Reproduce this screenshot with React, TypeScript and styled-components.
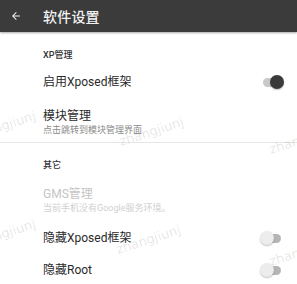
import React from "react";
import styled, { createGlobalStyle } from "styled-components";

const Global = createGlobalStyle`
  html, body { margin: 0; padding: 0; background: #ffffff; }
  body { font-family: Roboto, "Noto Sans CJK SC", "Noto Sans", sans-serif; }
  * { box-sizing: border-box; }
`;

const Page = styled.div`
  width: 297px;
  height: 284px;
  position: relative;
  overflow: hidden;
  background: #fff;
  display: flex;
  flex-direction: column;
`;

const Toolbar = styled.div`
  height: 32px;
  background: #3b3b3b;
  display: flex;
  align-items: center;
  padding-left: 9px;
  box-shadow: 0 1px 2px rgba(0,0,0,0.35);
  position: relative;
  z-index: 1;
  flex-shrink: 0;
`;

const Back = styled.div`
  width: 14px;
  height: 14px;
  display: flex;
  align-items: center;
  justify-content: center;
`;

const Title = styled.div`
  margin-left: 20px;
  color: #f2f2f2;
  font-size: 14px;
  font-family: "Noto Sans CJK SC", sans-serif;
  font-weight: 500;
  letter-spacing: 0.2px;
`;

const Section = styled.div<{ $top: number }>`
  padding-top: ${(p) => p.$top}px;
  display: flex;
  flex-direction: column;
`;

const Header = styled.div`
  padding-left: 43px;
  font-size: 9px;
  height: 14px;
  line-height: 14px;
  color: #333;
  font-family: Roboto, "Noto Sans CJK SC", sans-serif;
  font-weight: 500;
`;

const Row = styled.div<{ $h: number; $pt?: number }>`
  height: ${(p) => p.$h}px;
  padding-top: ${(p) => p.$pt ?? 0}px;
  display: flex;
  align-items: center;
  padding-left: 43px;
  padding-right: 14px;
`;

const Texts = styled.div`
  flex: 1;
  display: flex;
  flex-direction: column;
`;

const Label = styled.div<{ $dim?: boolean }>`
  font-size: 12px;
  line-height: 15px;
  color: ${(p) => (p.$dim ? "#c4c4c4" : "#2a2a2a")};
  font-family: Roboto, "Noto Sans CJK SC", sans-serif;
`;

const Sub = styled.div<{ $dim?: boolean }>`
  font-size: 9px;
  line-height: 12px;
  color: ${(p) => (p.$dim ? "#d0d0d0" : "#8a8a8a")};
  font-family: Roboto, "Noto Sans CJK SC", sans-serif;
`;

const Divider = styled.div`
  height: 1px;
  background: #e6e6e6;
`;

const Track = styled.div<{ $on: boolean }>`
  width: 18px;
  height: 9px;
  border-radius: 5px;
  background: ${(p) => (p.$on ? "#c9c9c9" : "#b5b5b5")};
  position: relative;
  margin-right: 2px;
`;

const Thumb = styled.div<{ $on: boolean }>`
  position: absolute;
  top: -2.5px;
  left: ${(p) => (p.$on ? "7px" : "-3px")};
  width: 14px;
  height: 14px;
  border-radius: 50%;
  background: ${(p) => (p.$on ? "#3a3a3a" : "#ececec")};
  box-shadow: 0 1px 1.5px rgba(0,0,0,0.25);
`;

const Mark = styled.div`
  position: absolute;
  font-family: "DejaVu Sans", sans-serif;
  font-size: 13px;
  color: rgba(0,0,0,0.11);
  transform: rotate(-18deg);
  pointer-events: none;
  white-space: nowrap;
  z-index: 2;
`;

const Switch = ({ on }: { on: boolean }) => (
  <Track $on={on}>
    <Thumb $on={on} />
  </Track>
);

export default function App() {
  return (
    <>
      <Global />
      <Page>
        <Toolbar>
          <Back>
            <svg width="12" height="12" viewBox="0 0 24 24">
              <path d="M20 11H7.83l5.59-5.59L12 4l-8 8 8 8 1.41-1.41L7.83 13H20v-2z" fill="#f0f0f0" />
            </svg>
          </Back>
          <Title>软件设置</Title>
        </Toolbar>
        <Section $top={16}>
          <Header>XP管理</Header>
          <Row $h={40}>
            <Texts>
              <Label>启用Xposed框架</Label>
            </Texts>
            <Switch on={true} />
          </Row>
          <Row $h={40}>
            <Texts>
              <Label>模块管理</Label>
              <Sub>点击跳转到模块管理界面</Sub>
            </Texts>
          </Row>
        </Section>
        <Section $top={0}>
          <Divider />
        </Section>
        <Section $top={15}>
          <Header>其它</Header>
          <Row $h={50} $pt={6}>
            <Texts>
              <Label $dim>GMS管理</Label>
              <Sub $dim>当前手机没有Google服务环境。</Sub>
            </Texts>
          </Row>
          <Row $h={32}>
            <Texts>
              <Label>隐藏Xposed框架</Label>
            </Texts>
            <Switch on={false} />
          </Row>
          <Row $h={32}>
            <Texts>
              <Label>隐藏Root</Label>
            </Texts>
            <Switch on={false} />
          </Row>
        </Section>
        <Mark style={{ left: -30, top: 118 }}>zhangjiunj</Mark>
        <Mark style={{ left: 118, top: 124 }}>zhangjiunj</Mark>
        <Mark style={{ left: 268, top: 132 }}>zhangjiunj</Mark>
        <Mark style={{ left: -30, top: 226 }}>zhangjiunj</Mark>
        <Mark style={{ left: 115, top: 232 }}>zhangjiunj</Mark>
        <Mark style={{ left: 268, top: 244 }}>zhangjiunj</Mark>
      </Page>
    </>
  );
}
